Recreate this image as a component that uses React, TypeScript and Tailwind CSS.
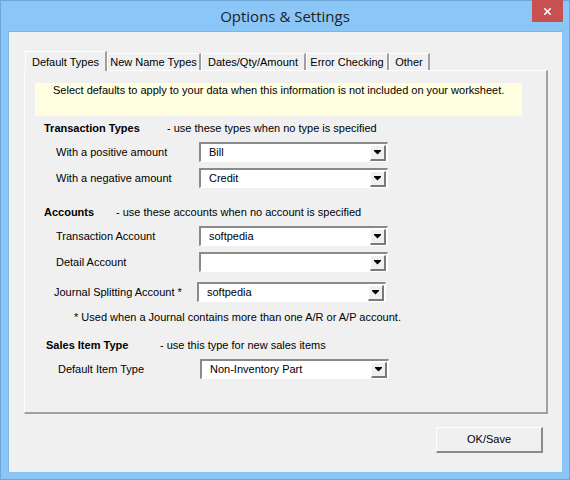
import { X } from "lucide-react"

const tabs = ["Default Types", "New Name Types", "Dates/Qty/Amount", "Error Checking", "Other"]
const tabWidths = [82, 94, 105, 83, 41]

function Dropdown({ value, width = 189 }: { value: string; width?: number }) {
  return (
    <div
      className="flex h-[20px] items-center border-t-2 border-l-2 border-r border-b border-t-[#8a8a8a] border-l-[#8a8a8a] border-r-white border-b-white bg-white"
      style={{ width }}
    >
      <span className="flex-1 truncate pl-[8px] text-[11px] leading-none text-black">{value}</span>
      <div className="mr-[1px] flex h-[16px] w-[16px] items-center justify-center border-t border-l border-r-2 border-b-2 border-t-white border-l-white border-r-[#7a7a7a] border-b-[#7a7a7a] bg-[#f0f0f0]">
        <svg width="7" height="5" viewBox="0 0 7 5">
          <rect x="0" y="0" width="7" height="1" fill="#000" />
          <path d="M0 1h7L3.5 4.5z" fill="#000" />
        </svg>
      </div>
    </div>
  )
}

function Row({
  label,
  value,
  labelPad,
  gap,
  className = "",
}: {
  label: string
  value: string
  labelPad: number
  gap: number
  className?: string
}) {
  return (
    <div className={`flex h-[20px] items-center ${className}`}>
      <span className="text-[11px] text-black" style={{ paddingLeft: labelPad, width: gap }}>
        {label}
      </span>
      <Dropdown value={value} />
    </div>
  )
}

export default function App() {
  return (
    <div className="flex h-[480px] w-[570px] flex-col border border-[#6fa6d6] bg-[#8bc6f8] font-['Liberation_Sans',Arial,sans-serif]">
      {/* title bar */}
      <div className="relative flex h-[30px] flex-none items-center justify-center">
        <span className="font-['Open_Sans',sans-serif] text-[15px] text-[#222]">Options &amp; Settings</span>
        <div className="absolute top-[-1px] right-[6px] flex h-[22px] w-[31px] items-center justify-center bg-[#c75050]">
          <X className="size-[11px] text-white" strokeWidth={3.5} />
        </div>
      </div>

      {/* client */}
      <div className="mx-[7px] mb-[7px] flex flex-1 flex-col border-t border-l border-[#7fb4e4] bg-[#f0f0f0] pl-[15px] pt-[19px]">
        {/* tab strip */}
        <div className="flex h-[19px] items-end">
          {tabs.map((t, i) => {
            const active = i === 0
            return (
              <div
                key={t}
                className={
                  active
                    ? "relative z-10 mb-[-1px] flex h-[20px] items-start justify-center border-t border-l border-r-2 border-t-white border-l-white border-r-[#a0a0a0] bg-[#f0f0f0] pt-[2px] text-[11px] text-black"
                    : "flex h-[17px] items-center justify-center border-t border-l border-r-2 border-t-white border-l-white border-r-[#a0a0a0] bg-[#f0f0f0] text-[11px] text-black"
                }
                style={{ width: tabWidths[i], marginLeft: i === 0 ? 1 : 0 }}
              >
                {t}
              </div>
            )
          })}
        </div>

        {/* panel */}
        <div className="flex h-[344px] w-[524px] flex-col border-t border-l border-r-2 border-b-2 border-t-white border-l-white border-r-[#a0a0a0] border-b-[#a0a0a0] pl-[10px]">
          <div className="mt-[12px] h-[33px] w-[487px] bg-[#fffee0] pt-[0px] pl-[18px] text-[11px] leading-[14px] text-black">
            Select defaults to apply to your data when this information is not included on your worksheet.
          </div>

          <div className="mt-[4px] flex h-[16px] items-center text-[11px] text-black">
            <span className="w-[132px] pl-[9px] font-bold">Transaction Types</span>
            <span>- use these types when no type is specified</span>
          </div>
          <Row className="mt-[6px]" label="With a positive amount" value="Bill" labelPad={21} gap={164} />
          <Row className="mt-[6px]" label="With a negative amount" value="Credit" labelPad={21} gap={164} />

          <div className="mt-[16px] flex h-[16px] items-center text-[11px] text-black">
            <span className="w-[81px] pl-[9px] font-bold">Accounts</span>
            <span>- use these accounts when no account is specified</span>
          </div>
          <Row className="mt-[6px]" label="Transaction Account" value="softpedia" labelPad={21} gap={164} />
          <Row className="mt-[6px]" label="Detail Account" value="" labelPad={21} gap={164} />
          <Row className="mt-[10px]" label="Journal Splitting Account *" value="softpedia" labelPad={19} gap={162} />

          <div className="mt-[7px] flex h-[16px] items-center pl-[39px] text-[11px] text-black">
            * Used when a Journal contains more than one A/R or A/P account.
          </div>

          <div className="mt-[12px] flex h-[16px] items-center text-[11px] text-black">
            <span className="w-[125px] pl-[11px] font-bold">Sales Item Type</span>
            <span>- use this type for new sales items</span>
          </div>
          <Row className="mt-[6px]" label="Default Item Type" value="Non-Inventory Part" labelPad={23} gap={165} />
        </div>

        {/* footer */}
        <div className="mt-[13px] flex justify-end pr-[19px]">
          <button className="h-[26px] w-[107px] border-t border-l border-r-2 border-b-2 border-t-white border-l-white border-r-[#8a8a8a] border-b-[#8a8a8a] bg-[#f0f0f0] text-[11px] text-black">
            OK/Save
          </button>
        </div>
      </div>
    </div>
  )
}
